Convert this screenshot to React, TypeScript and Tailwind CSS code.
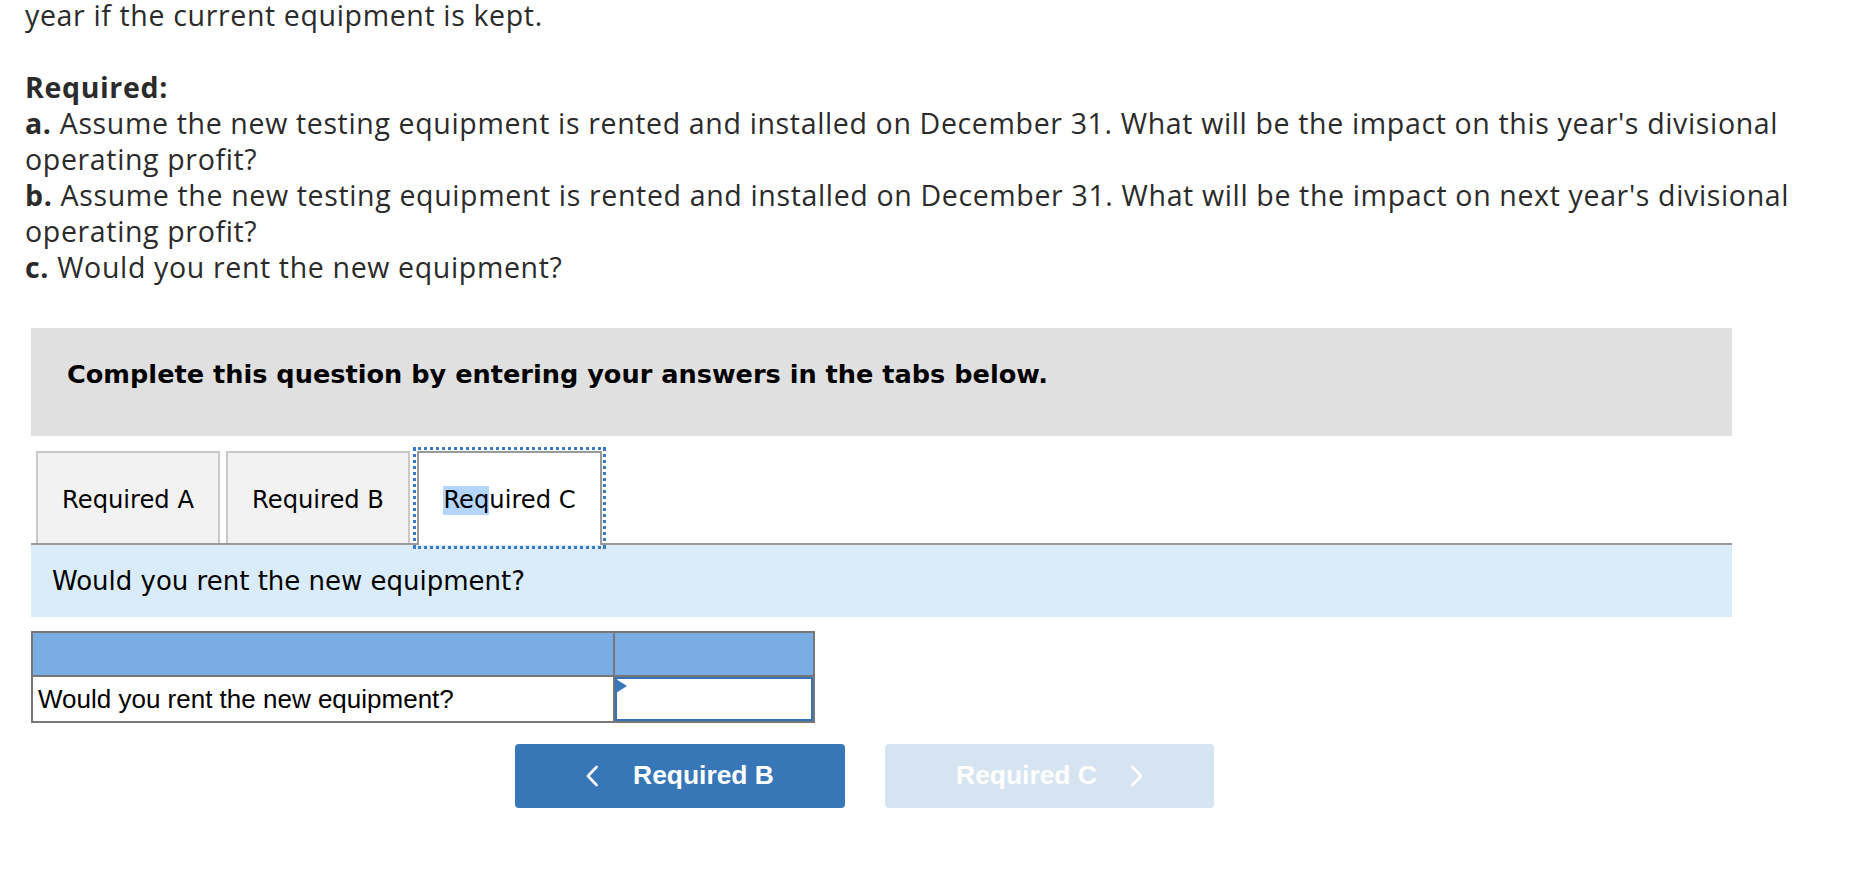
export default function App() {
  return (
    <div className="w-[1873px] h-[872px] bg-white overflow-hidden">
      <div className="pl-[25px] text-[28.5px] leading-[36px] tracking-[0.65px] text-[#2b2b2b] font-['Open_Sans',sans-serif]">
        <p className="whitespace-nowrap leading-[30px]">year if the current equipment is kept.</p>
        <p className="mt-[39px] font-bold">Required:</p>
        <p className="whitespace-nowrap">
          <span className="font-bold">a.</span> Assume the new testing equipment is rented and installed on December 31. What will be the impact on this year's divisional
        </p>
        <p>operating profit?</p>
        <p className="whitespace-nowrap">
          <span className="font-bold">b.</span> Assume the new testing equipment is rented and installed on December 31. What will be the impact on next year's divisional
        </p>
        <p>operating profit?</p>
        <p>
          <span className="font-bold">c.</span> Would you rent the new equipment?
        </p>
      </div>

      <div className="ml-[31px] w-[1701px] mt-[43px]">
        <div className="h-[108px] bg-[#e0e0e0] pt-[31px] pl-[36px]">
          <p className="font-['DejaVu_Sans',sans-serif] font-bold text-[25.6px] leading-[30px] text-black whitespace-nowrap">
            Complete this question by entering your answers in the tabs below.
          </p>
        </div>

        <div className="mt-[15px] flex items-start gap-[6px] pl-[5px] border-b-2 border-[#999999] font-['DejaVu_Sans',sans-serif] text-[24.2px] text-black">
          <div className="w-[184px] h-[92px] pt-[4px] border-2 border-b-0 border-[#c8c8c8] bg-[#f2f2f2] flex items-center justify-center">
            Required A
          </div>
          <div className="w-[184px] h-[92px] pt-[4px] border-2 border-b-0 border-[#c8c8c8] bg-[#f2f2f2] flex items-center justify-center">
            Required B
          </div>
          <div className="ml-[1px] w-[185px] h-[94px] pt-[2px] -mb-[2px] border-2 border-b-0 border-[#999999] bg-white flex items-center justify-center outline-[3px] outline-dotted outline-[#3b79c2] outline-offset-[1px]">
            <span className="inline-block leading-[29px] bg-[#b4d5fd]">Req</span>
            <span>uired C</span>
          </div>
        </div>

        <div className="h-[72px] bg-[#daecf9] flex items-center pl-[21px] font-['DejaVu_Sans',sans-serif] text-[26px] text-black">
          Would you rent the new equipment?
        </div>

        <div className="mt-[14px] w-[784px] border-2 border-[#777777] font-['Liberation_Sans',Arial,sans-serif] text-[26px] text-black">
          <div className="flex h-[44px] bg-[#79ade3] border-b-2 border-[#777777]">
            <div className="w-[582px] border-r-2 border-[#777777]" />
            <div className="flex-1" />
          </div>
          <div className="flex h-[44px] bg-white">
            <div className="w-[582px] border-r-2 border-[#777777] flex items-center pl-[5px] whitespace-nowrap">
              Would you rent the new equipment?
            </div>
            <div className="relative flex-1">
              <input className="w-full h-full border-2 border-[#3572b6] bg-white outline-none" aria-label="answer" />
              <svg className="absolute left-[1px] top-[2px]" width="11" height="14" viewBox="0 0 11 14">
                <polygon points="0,0 11,7 0,14" fill="#3a77bd" />
              </svg>
            </div>
          </div>
        </div>

        <div className="mt-[21px] ml-[484px] flex gap-[40px] font-['Liberation_Sans',Arial,sans-serif] font-bold text-[26.4px] text-white">
          <button className="w-[330px] h-[64px] rounded-[4px] bg-[#3777b8] flex items-center justify-center gap-[35px]">
            <svg width="12" height="22" viewBox="0 0 12 22" fill="none">
              <polyline points="10.5,2 2,11 10.5,20" stroke="white" strokeWidth="2.6" strokeLinecap="round" strokeLinejoin="round" />
            </svg>
            <span>Required B</span>
          </button>
          <button className="w-[329px] h-[64px] rounded-[4px] bg-[#d6e4f1] flex items-center justify-center gap-[34px]">
            <span>Required C</span>
            <svg width="12" height="22" viewBox="0 0 12 22" fill="none">
              <polyline points="1.5,2 10,11 1.5,20" stroke="white" strokeWidth="2.6" strokeLinecap="round" strokeLinejoin="round" />
            </svg>
          </button>
        </div>
      </div>
    </div>
  );
}
